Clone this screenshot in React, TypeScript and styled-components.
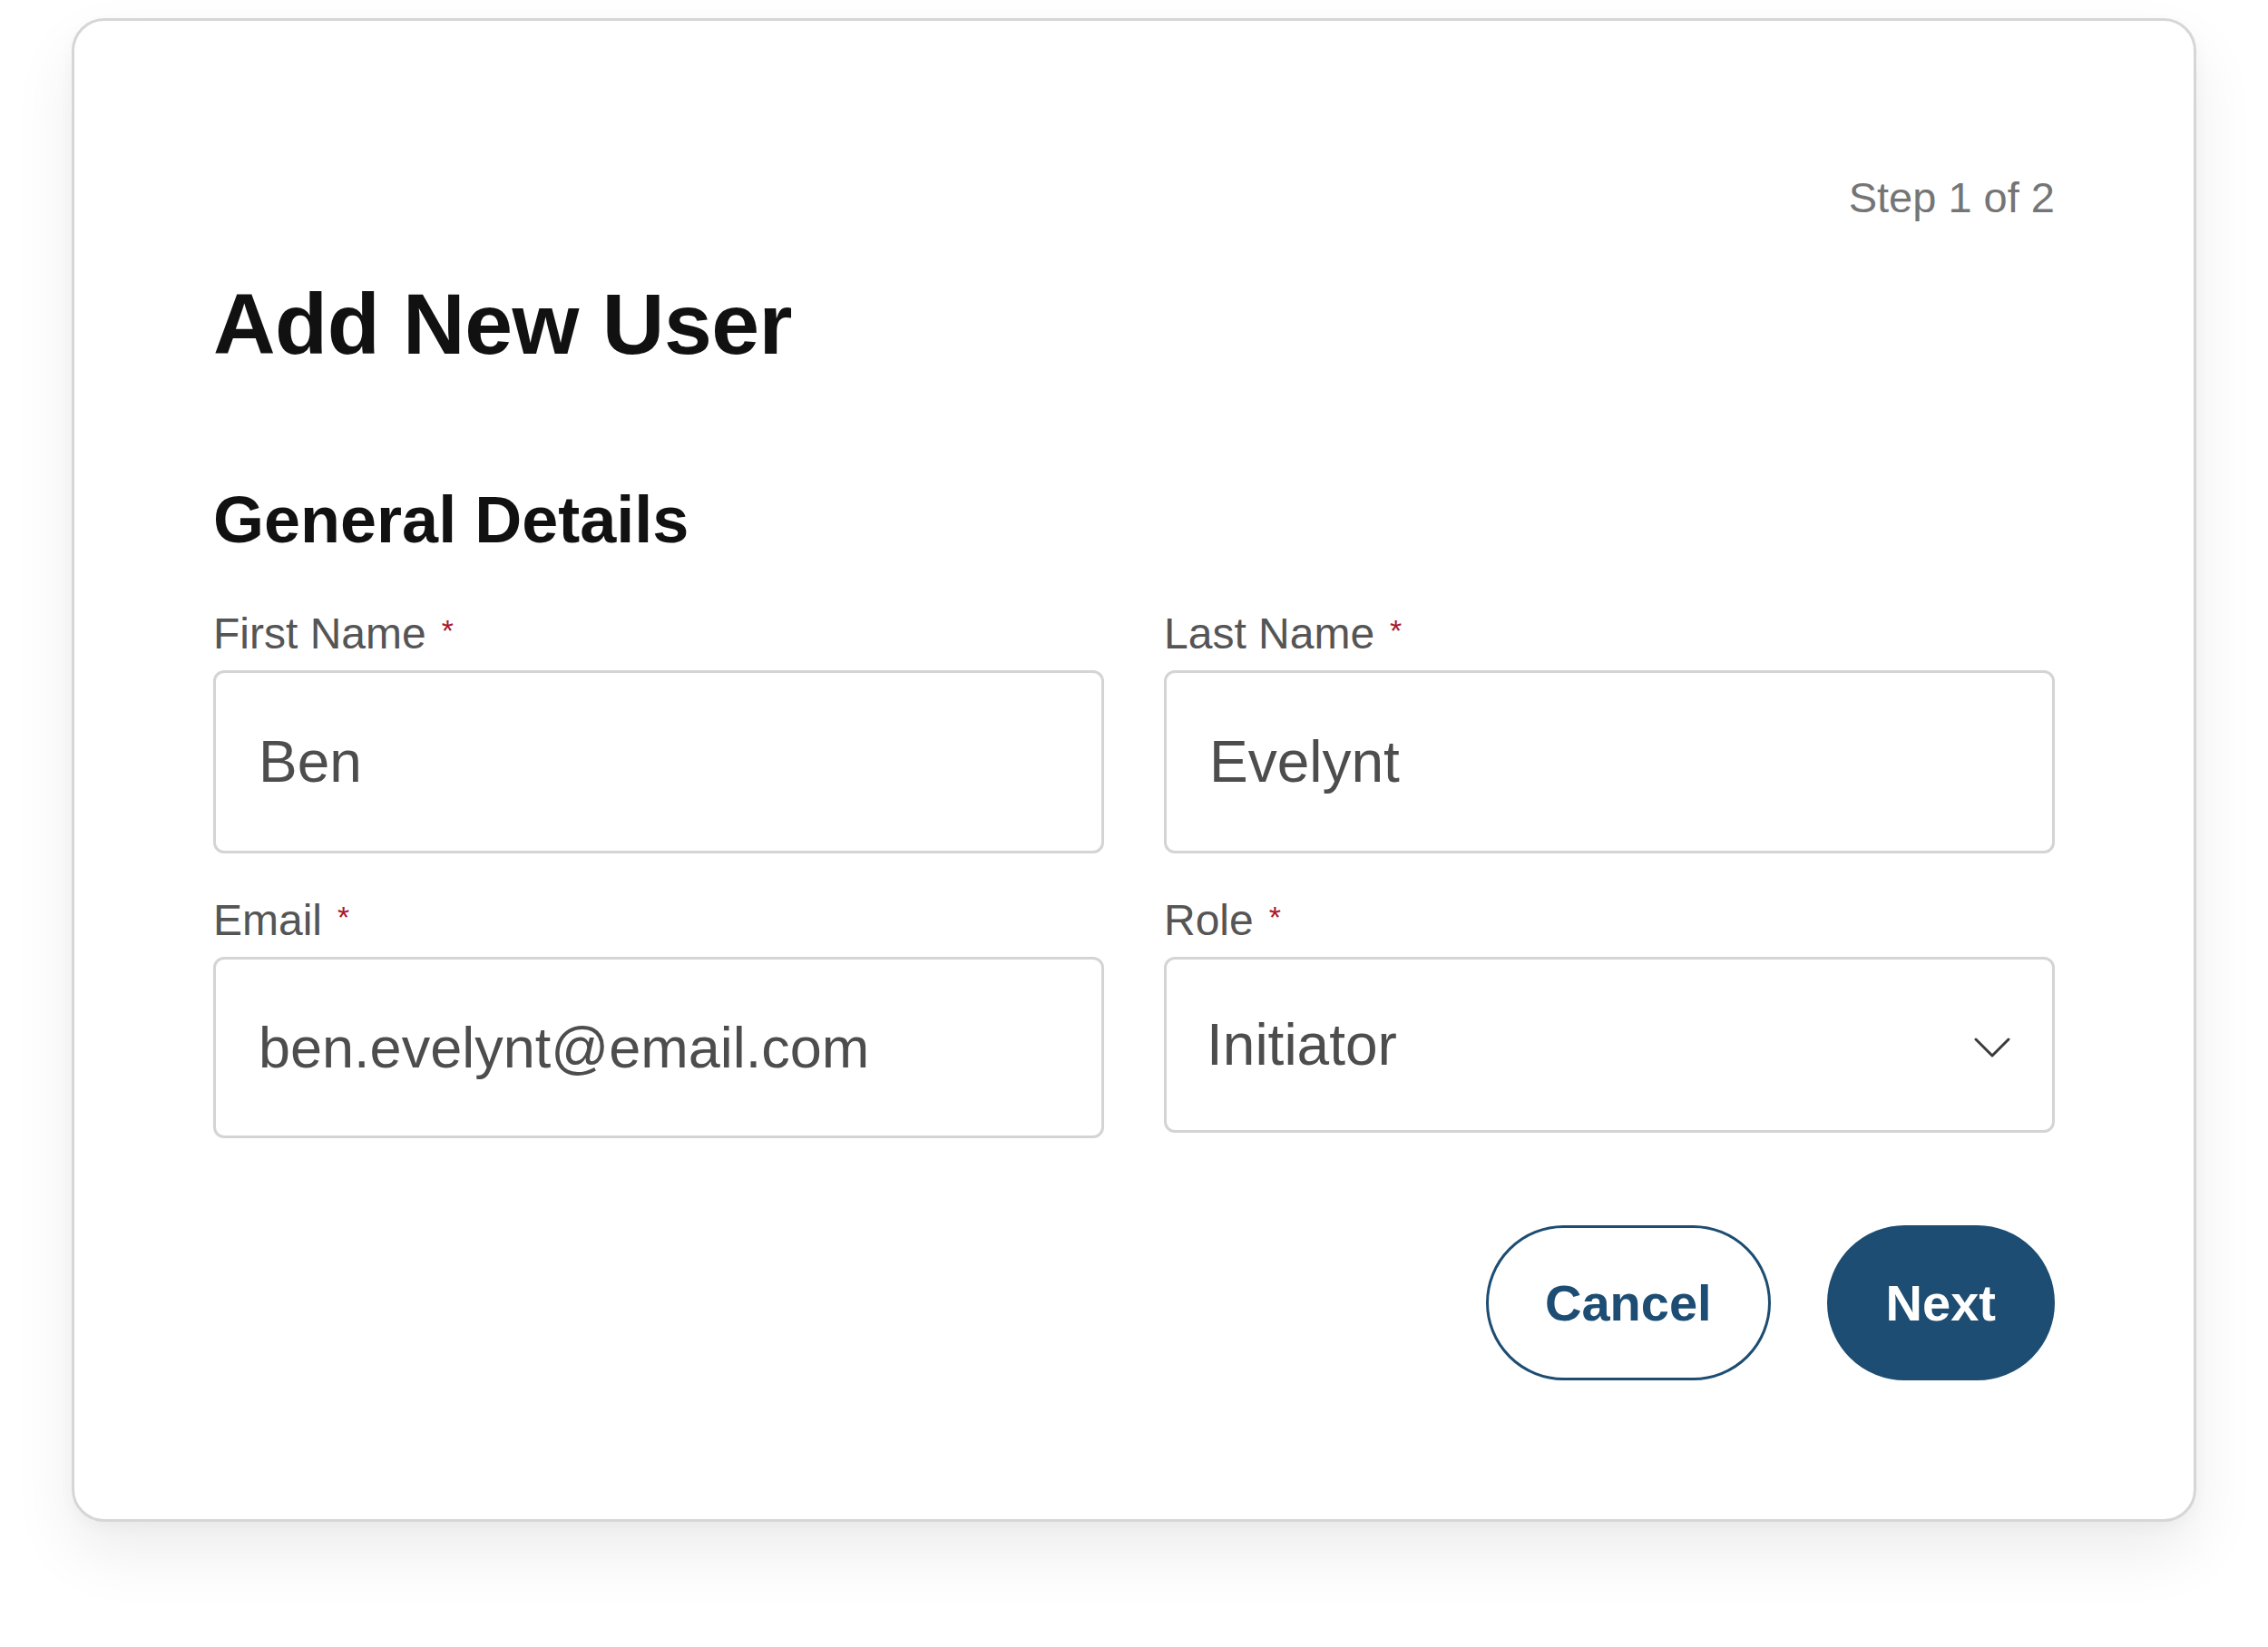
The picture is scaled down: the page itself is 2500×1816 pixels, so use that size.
import React from "react";
import styled, { createGlobalStyle } from "styled-components";

const GlobalStyle = createGlobalStyle`
  html, body {
    margin: 0;
    padding: 0;
    background: #ffffff;
  }
  body {
    font-family: "Liberation Sans", Arial, sans-serif;
  }
  * {
    box-sizing: border-box;
  }
`;

const Page = styled.div`
  padding: 20px 79px 120px 79px;
`;

const Card = styled.section`
  width: 2342px;
  background: #ffffff;
  border: 3px solid #d6d6d6;
  border-radius: 36px;
  padding: 171px 153px 153px 153px;
  box-shadow: 0 34px 70px rgba(0, 0, 0, 0.075), 0 6px 18px rgba(0, 0, 0, 0.03);
  display: flex;
  flex-direction: column;
`;

const StepText = styled.div`
  align-self: flex-end;
  font-size: 47px;
  line-height: 1;
  color: #757575;
`;

const Title = styled.h1`
  margin: 69px 0 0 0;
  font-size: 95px;
  line-height: 1;
  font-weight: 700;
  letter-spacing: -0.5px;
  color: #111111;
`;

const SectionTitle = styled.h2`
  margin: 132px 0 0 0;
  font-size: 72px;
  line-height: 1;
  font-weight: 700;
  color: #111111;
`;

const FieldGrid = styled.div`
  margin-top: 66px;
  display: grid;
  grid-template-columns: 1fr 1fr;
  column-gap: 66px;
  row-gap: 50px;
  align-items: start;
`;

const Field = styled.div`
  display: flex;
  flex-direction: column;
  gap: 16px;
`;

const Label = styled.label`
  display: flex;
  align-items: flex-start;
  font-size: 48px;
  line-height: 1;
  color: #555555;
`;

const Required = styled.span`
  color: #a8192e;
  font-size: 34px;
  line-height: 1;
  margin-left: 17px;
  margin-top: 3px;
`;

const TextInput = styled.input<{ $h?: number; $size?: number }>`
  width: 100%;
  height: ${(p) => p.$h ?? 202}px;
  border: 3px solid #d4d4d4;
  border-radius: 12px;
  padding: 0 40px 0 47px;
  font-family: "Liberation Sans", Arial, sans-serif;
  font-size: ${(p) => p.$size ?? 64}px;
  color: #4d4d4d;
  background: #ffffff;
  outline: none;
`;

const SelectBox = styled.div`
  width: 100%;
  height: 194px;
  border: 3px solid #d4d4d4;
  border-radius: 12px;
  padding: 0 46px 0 44px;
  display: flex;
  align-items: center;
  justify-content: space-between;
  background: #ffffff;
  cursor: pointer;
`;

const SelectValue = styled.span`
  font-size: 64px;
  line-height: 1;
  color: #4d4d4d;
`;

const ChevronWrap = styled.span`
  display: flex;
  margin-top: 6px;
`;

const Actions = styled.div`
  margin-top: 96px;
  display: flex;
  justify-content: flex-end;
  gap: 62px;
`;

const Button = styled.button<{ $primary?: boolean }>`
  height: 171px;
  padding: 0 62px;
  border-radius: 86px;
  border: 3px solid #1d4d72;
  background: ${(p) => (p.$primary ? "#1d4d72" : "#ffffff")};
  color: ${(p) => (p.$primary ? "#ffffff" : "#1d4d72")};
  font-family: "Liberation Sans", Arial, sans-serif;
  font-weight: 700;
  font-size: 56px;
  line-height: 1;
  cursor: pointer;
`;

const Chevron = () => (
  <ChevronWrap>
    <svg width="40" height="22" viewBox="0 0 40 22" fill="none">
      <path d="M2 2 L20 20 L38 2" stroke="#3a3a3a" strokeWidth="3" strokeLinecap="round" strokeLinejoin="round" />
    </svg>
  </ChevronWrap>
);

export default function App() {
  return (
    <Page>
      <GlobalStyle />
      <Card>
        <StepText>Step 1 of 2</StepText>
        <Title>Add New User</Title>
        <SectionTitle>General Details</SectionTitle>
        <FieldGrid>
          <Field>
            <Label>
              First Name<Required>*</Required>
            </Label>
            <TextInput readOnly value="Ben" />
          </Field>
          <Field>
            <Label>
              Last Name<Required>*</Required>
            </Label>
            <TextInput readOnly value="Evelynt" />
          </Field>
          <Field>
            <Label>
              Email<Required>*</Required>
            </Label>
            <TextInput readOnly value="ben.evelynt@email.com" $h={200} $size={63} />
          </Field>
          <Field>
            <Label>
              Role<Required>*</Required>
            </Label>
            <SelectBox>
              <SelectValue>Initiator</SelectValue>
              <Chevron />
            </SelectBox>
          </Field>
        </FieldGrid>
        <Actions>
          <Button>Cancel</Button>
          <Button $primary>Next</Button>
        </Actions>
      </Card>
    </Page>
  );
}
